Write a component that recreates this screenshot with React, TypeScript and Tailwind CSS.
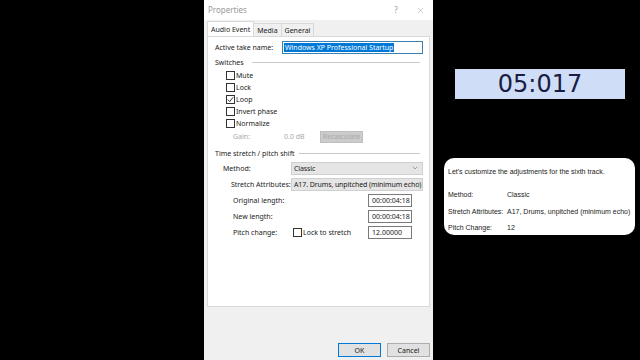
import { ChevronDown, X } from "lucide-react";

function Check({ on }: { on?: boolean }) {
  return (
    <span className="w-[9px] h-[9px] border border-[#333] bg-white flex items-center justify-center shrink-0">
      {on && (
        <svg width="7" height="7" viewBox="0 0 7 7">
          <path d="M0.8 3.6 L2.7 5.5 L6.2 1.2" fill="none" stroke="#222" strokeWidth="0.9" />
        </svg>
      )}
    </span>
  );
}

function Switch({ label, on }: { label: string; on?: boolean }) {
  return (
    <div className="flex items-center h-[12px] pl-[18px] gap-[1px]">
      <Check on={on} />
      <span>{label}</span>
    </div>
  );
}

function Drop({ text }: { text: string }) {
  return (
    <div className="w-[132px] h-[13px] bg-[#e5e5e5] border border-[#cfcfcf] flex items-center justify-between pl-[2px] pr-[3px] overflow-hidden">
      <span className="tracking-[-0.1px]">{text}</span>
      <ChevronDown size={8} strokeWidth={1.5} color="#555" className="shrink-0" />
    </div>
  );
}

function Field({ label, value, extra }: { label: string; value: string; extra?: boolean }) {
  return (
    <div className="flex items-center h-[16px] pl-[25px]">
      <span className="w-[60px]">{label}</span>
      <div className="w-[75px] flex items-center gap-[1px]">
        {extra && (
          <>
            <Check />
            <span>Lock to stretch</span>
          </>
        )}
      </div>
      <div className="w-[44px] h-[13px] border border-[#7a7a7a] bg-white flex items-center pl-[3px]">{value}</div>
    </div>
  );
}

export default function App() {
  return (
    <div className="w-[640px] h-[360px] bg-black flex overflow-hidden whitespace-nowrap">
      {/* dialog */}
      <div
        className="ml-[204px] w-[229px] h-full bg-[#f0f0f0] flex flex-col text-[7px] text-[#1a1a1a] leading-none"
        style={{ fontFamily: '"Noto Sans", "Open Sans", sans-serif' }}
      >
        <div className="h-[20px] bg-white flex items-center pl-[4px] text-[8px] text-[#9a9a9a]">
          <span className="flex-1">Properties</span>
          <span className="w-[22px] text-center">?</span>
          <span className="w-[26px] flex justify-center">
            <X size={9} strokeWidth={1} color="#888" />
          </span>
        </div>
        <div className="flex items-end h-[16px] pl-[3px]">
          <div className="h-[15px] px-[3px] bg-white border border-b-0 border-[#d9d9d9] flex items-center">Audio Event</div>
          <div className="h-[13px] px-[3px] border-t border-r border-[#d9d9d9] flex items-center">Media</div>
          <div className="h-[13px] px-[3px] border-t border-r border-[#d9d9d9] flex items-center">General</div>
        </div>
        <div className="mx-[3px] h-[271px] bg-white border border-[#d9d9d9] flex flex-col pt-[3px]">
          <div className="flex items-center h-[14px] pl-[7px]">
            <span className="w-[67px]">Active take name:</span>
            <div className="w-[141px] h-[13px] border border-[#3c7fb1] flex items-center pl-[1px]">
              <span className="bg-[#0078d7] text-white px-[1px] h-[9px] flex items-center">Windows XP Professional Startup</span>
            </div>
          </div>
          <div className="flex items-center h-[12px] pl-[7px] mt-[2px]">
            <span>Switches</span>
            <div className="flex-1 h-px bg-[#c8c8c8] ml-[8px] mr-[9px]" />
          </div>
          <div className="mt-[1px]">
            <Switch label="Mute" />
            <Switch label="Lock" />
            <Switch label="Loop" on />
            <Switch label="Invert phase" />
            <Switch label="Normalize" />
          </div>
          <div className="flex items-center h-[13px] mt-[1px] pl-[25px] text-[#a8a8a8]">
            <span className="w-[51px]">Gain:</span>
            <span className="w-[36px]">0.0 dB</span>
            <div className="w-[43px] h-[12px] bg-[#cccccc] border border-[#bfbfbf] flex items-center justify-center">Recalculate</div>
          </div>
          <div className="flex items-center h-[12px] pl-[7px] mt-[4px]">
            <span>Time stretch / pitch shift</span>
            <div className="flex-1 h-px bg-[#c8c8c8] ml-[4px] mr-[9px]" />
          </div>
          <div className="flex items-center h-[16px] pl-[15px] mt-[1px]">
            <span className="w-[68px]">Method:</span>
            <Drop text="Classic" />
          </div>
          <div className="flex items-center h-[16px] pl-[23px]">
            <span className="w-[60px]">Stretch Attributes:</span>
            <Drop text="A17. Drums, unpitched (minimum echo)" />
          </div>
          <Field label="Original length:" value="00:00:04:18" />
          <Field label="New length:" value="00:00:04:18" />
          <Field label="Pitch change:" value="12.00000" extra />
        </div>
        <div className="flex justify-end gap-[6px] pr-[3px] mt-[36px]">
          <div className="w-[43px] h-[14px] bg-[#e1e1e1] border border-[#0078d7] flex items-center justify-center">OK</div>
          <div className="w-[43px] h-[14px] bg-[#e1e1e1] border border-[#adadad] flex items-center justify-center">Cancel</div>
        </div>
      </div>

      {/* right column */}
      <div className="ml-[11px] w-[191px] flex flex-col" style={{ fontFamily: '"Liberation Sans", Arial, sans-serif' }}>
        <div
          className="ml-[11px] w-[170px] h-[30px] mt-[69px] bg-[#cfdef6] flex items-center justify-center text-[24px] text-[#1a1c44] leading-none"
          style={{ fontFamily: '"DejaVu Sans", "Liberation Sans", sans-serif' }}
        >
          05:017
        </div>
        <div className="mt-[59px] w-[191px] h-[77px] bg-white rounded-[10px] text-[7px] text-[#222] leading-none pl-[4px] pt-[10px]">
          <div>Let's customize the adjustments for the sixth track.</div>
          <div className="flex mt-[16px]">
            <span className="w-[59px]">Method:</span>
            <span>Classic</span>
          </div>
          <div className="flex mt-[10px]">
            <span className="w-[59px]">Stretch Attributes:</span>
            <span>A17, Drums, unpitched (minimum echo)</span>
          </div>
          <div className="flex mt-[9px]">
            <span className="w-[59px]">Pitch Change:</span>
            <span>12</span>
          </div>
        </div>
      </div>
    </div>
  );
}
